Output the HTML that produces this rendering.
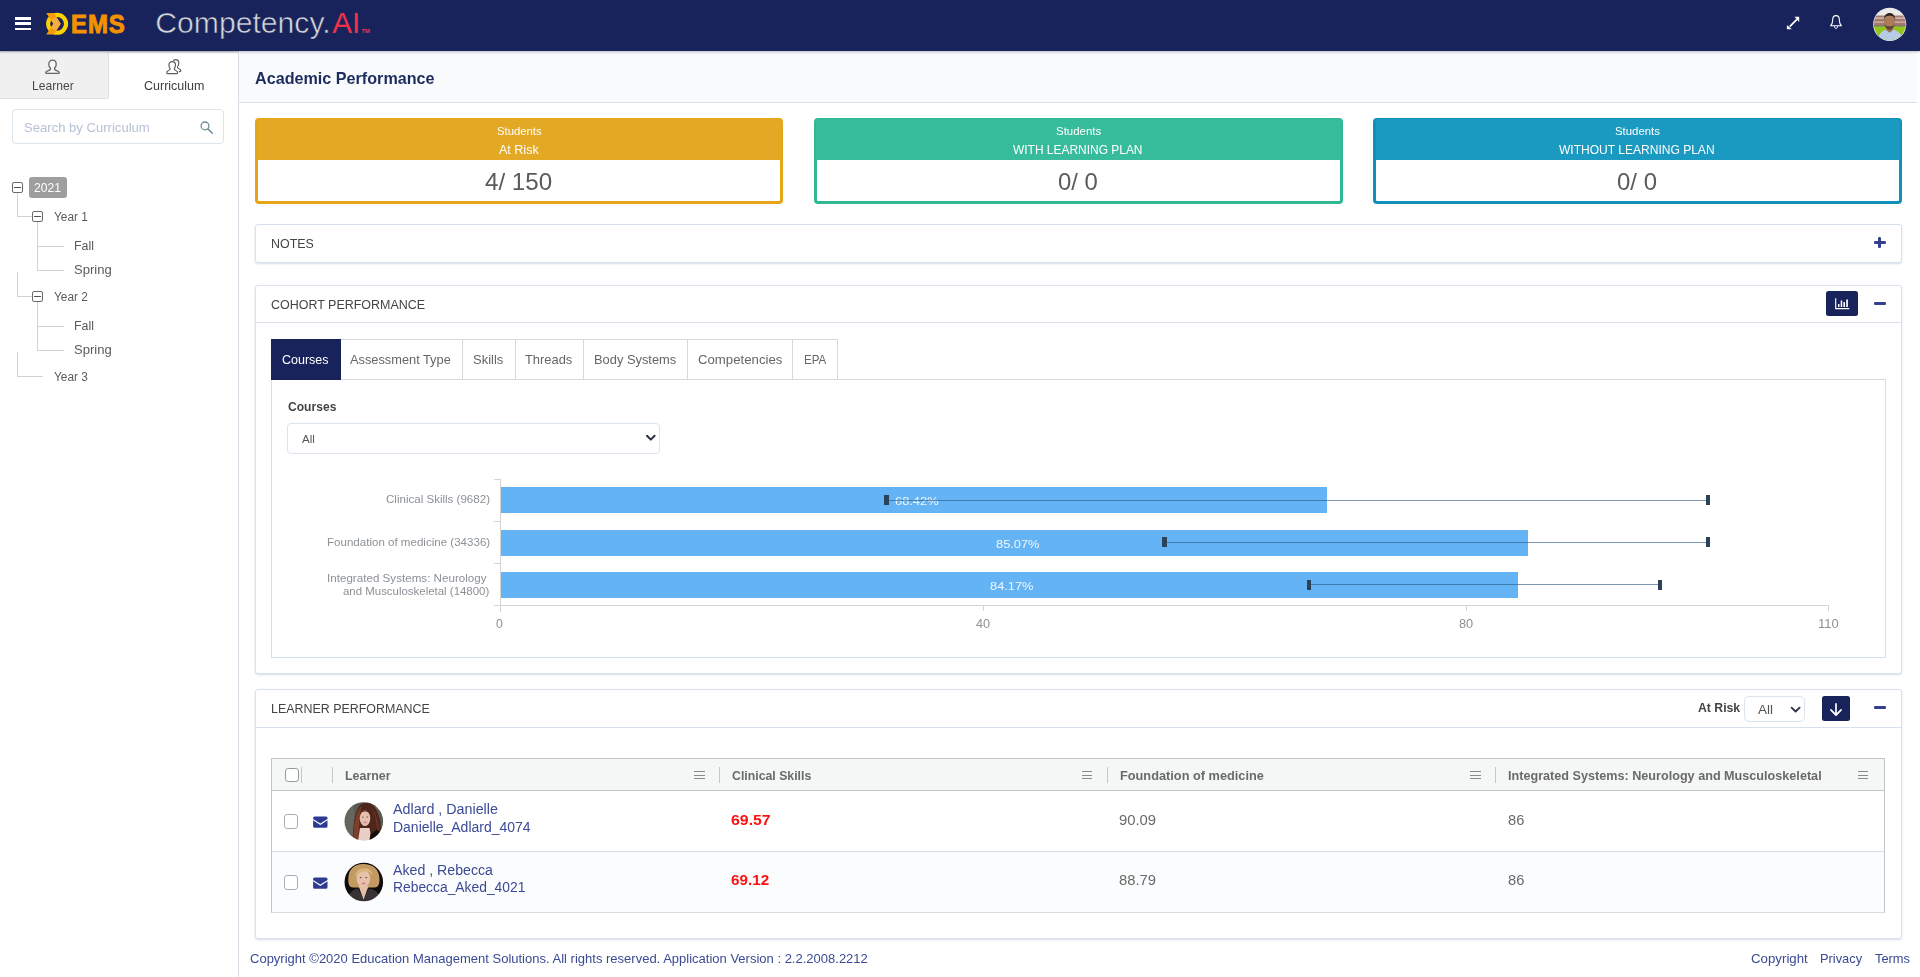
<!DOCTYPE html>
<html><head><meta charset="utf-8"><title>Academic Performance</title>
<style>
*{box-sizing:border-box;margin:0;padding:0}
html,body{width:1920px;height:977px;overflow:hidden;background:#fff;font-family:"Liberation Sans",sans-serif;}
.t{position:absolute;white-space:nowrap;transform-origin:0 50%;display:block}
.b{position:absolute}
.panel{position:absolute;border:1px solid #d9e2ec;border-radius:3px;background:#fff;box-shadow:0 1px 2px rgba(180,195,215,.55)}
</style></head><body>
<div class="b" style="left:0;top:0;width:1920px;height:51px;background:#18235b;box-shadow:0 1px 2px rgba(0,0,0,.25)"></div>
<div class="b" style="left:15px;top:17.0px;width:16px;height:2.6px;background:#fff"></div>
<div class="b" style="left:15px;top:22.3px;width:16px;height:2.6px;background:#fff"></div>
<div class="b" style="left:15px;top:27.6px;width:16px;height:2.6px;background:#fff"></div>
<svg class="b" style="left:40px;top:5px" width="100" height="40" viewBox="40 5 100 40">
<defs><clipPath id="hole"><circle cx="57.1" cy="23.85" r="6.9"/></clipPath></defs>
<circle cx="57.1" cy="23.85" r="8.95" fill="none" stroke="#fdd000" stroke-width="4.1"/>
<polygon points="46.2,13.1 53.9,13.1 60.7,23.8 53.9,34.5 46.2,34.5 53.4,23.8" fill="#f59a0a"/>
<polygon points="46.2,13.1 53.9,13.1 60.7,23.8 53.9,34.5 46.2,34.5 53.4,23.8" fill="#f6ac40" clip-path="url(#hole)"/>
<text transform="translate(71.1,33.05) scale(0.927,1)" x="0" y="0" font-family="Liberation Sans, sans-serif" font-weight="700" font-size="25.9" fill="#f39200" stroke="#f39200" stroke-width="0.95" letter-spacing="0.95">EMS</text>
</svg>
<svg class="b" style="left:150px;top:0px" width="240" height="50" viewBox="150 0 240 50">
<text x="155.2" y="32.8" font-family="Liberation Sans, sans-serif" font-size="28.6" fill="#d6d8da" stroke="#18235b" stroke-width="0.55" textLength="175.5" lengthAdjust="spacingAndGlyphs">Competency.</text>
<text x="332.2" y="32.8" font-family="Liberation Sans, sans-serif" font-size="28.6" fill="#f1314b" stroke="#18235b" stroke-width="0" textLength="28" lengthAdjust="spacingAndGlyphs">AI</text>
<text x="361.5" y="33" font-family="Liberation Sans, sans-serif" font-size="5.5" font-weight="700" fill="#f1314b" textLength="8.5" lengthAdjust="spacingAndGlyphs">TM</text>
</svg>
<svg class="b" style="left:1780px;top:10px" width="26" height="26" viewBox="1780 10 26 26">
<g fill="#fff" stroke="none">
<polygon points="1799.2,16.8 1799.2,21.9 1794.5,16.8"/>
<polygon points="1786.9,29.2 1786.9,25.0 1791.8,29.2"/>
<polygon points="1796.3,18.7 1797.5,19.9 1790.3,27.2 1789.1,26.0"/>
</g></svg>
<svg class="b" style="left:1824px;top:10px" width="24" height="24" viewBox="1824 10 24 24">
<path d="M1830.5 25.8 C1832.6 24.0 1832.6 22.2 1832.6 20.4 C1832.6 17.4 1833.9 15.65 1836.0 15.65 C1838.1 15.65 1839.4 17.4 1839.4 20.4 C1839.4 22.2 1839.4 24.0 1841.5 25.8 Z" fill="none" stroke="#fff" stroke-width="1.1" stroke-linejoin="round"/>
<path d="M1834.4 26.2 C1834.4 29.2 1837.6 29.2 1837.6 26.2" fill="none" stroke="#fff" stroke-width="1.0"/>
</svg>
<svg class="b" style="left:1870px;top:5px" width="40" height="40" viewBox="1870 5 40 40">
<defs><clipPath id="avc"><circle cx="1889.7" cy="24.3" r="15.9"/></clipPath></defs>
<circle cx="1889.7" cy="24.3" r="16.6" fill="#e4e7ef"/>
<g clip-path="url(#avc)">
<rect x="1870" y="5" width="40" height="14" fill="#eceae8"/>
<rect x="1870" y="15.5" width="40" height="11" fill="#a9776b"/>
<rect x="1870" y="17.5" width="40" height="1.2" fill="#d8cfc9"/>
<rect x="1870" y="21.5" width="40" height="1.2" fill="#cdbfb8"/>
<rect x="1870" y="25" width="40" height="2" fill="#7f7a70"/>
<rect x="1870" y="26.5" width="40" height="9" fill="#93c51c"/>
<rect x="1870" y="33.5" width="40" height="10" fill="#86b628"/>
<path d="M1877.5 42 C1878 33.5 1882 31 1886.5 29.5 L1889.5 32 L1892.8 29.5 C1898 31 1902.3 33.5 1903 42Z" fill="#b8cbe6"/>
<path d="M1886.6 27 L1892.6 27 L1893 30 L1889.6 32.8 L1886.3 30Z" fill="#9a6d52"/>
<ellipse cx="1889.5" cy="21.4" rx="5.5" ry="7.6" fill="#ab7b5c"/>
<path d="M1883.9 20.6 C1883.2 10.5 1896 10.5 1895.2 20.6 C1894.6 16.8 1893 15.8 1889.5 15.8 C1886 15.8 1884.5 16.8 1883.9 20.6Z" fill="#2d2621"/>
<path d="M1884.6 23.5 C1885 31.5 1894 31.5 1894.5 23.5 C1893 27 1891.5 26.2 1889.5 26.2 C1887.5 26.2 1886 27 1884.6 23.5Z" fill="#5c4436"/>
</g></svg>
<div class="b" style="left:238px;top:51px;width:1px;height:926px;background:#d9dfe7"></div>
<div class="b" style="left:0;top:52px;width:109px;height:47px;background:#f0f0f0;border-right:1px solid #dcdfe3;border-bottom:1px solid #dcdfe3;border-bottom-right-radius:2px"></div>
<svg class="b" style="left:40px;top:56px" width="26" height="22" viewBox="40 56 26 22">
<path d="M52.5 60.2 C55.0 60.2 56.2 62.2 56.2 64.2 C56.2 66.2 55.4 67.4 54.5 68.3 C54.2 69.4 55.0 70.0 56.6 70.6 C58.8 71.4 59.5 72.0 59.3 72.8 C59.2 73.3 58.8 73.4 58.2 73.4 L46.8 73.4 C46.2 73.4 45.8 73.3 45.7 72.8 C45.5 72.0 46.2 71.4 48.4 70.6 C50.0 70.0 50.8 69.4 50.5 68.3 C49.6 67.4 48.8 66.2 48.8 64.2 C48.8 62.2 50.0 60.2 52.5 60.2 Z" fill="#f6f6f6" stroke="#666" stroke-width="1.3" stroke-linejoin="round"/>
</svg>
<svg class="b" style="left:160px;top:56px" width="28" height="22" viewBox="160 56 28 22">
<path d="M173.5 60.4 C174.3 59.8 175.0 59.6 175.6 59.6 C177.9 59.6 178.8 61.3 178.8 63.2 C178.8 64.8 178.3 65.9 177.5 66.7 C177.2 67.6 177.8 68.2 178.9 68.7 C180.4 69.4 181.0 70.1 180.8 70.9 C180.7 71.5 180.2 71.7 179.4 71.6" fill="none" stroke="#5e5e5e" stroke-width="1.2" stroke-linecap="round" stroke-linejoin="round"/>
<path d="M172.1 61.6 C174.3 61.6 175.5 63.2 175.5 65.0 C175.5 66.6 175.0 67.6 174.3 68.4 C174.0 69.4 174.6 70.0 175.8 70.5 C177.4 71.1 177.8 72.0 177.6 72.8 C177.5 73.4 177.1 73.6 176.5 73.6 L167.9 73.6 C167.3 73.6 166.9 73.4 166.8 72.8 C166.6 72.0 167.0 71.1 168.6 70.5 C169.8 70.0 170.4 69.4 170.1 68.4 C169.4 67.6 168.9 66.6 168.9 65.0 C168.9 63.2 170.1 61.6 172.1 61.6 Z" fill="#fff" stroke="#5e5e5e" stroke-width="1.2" stroke-linejoin="round"/>
</svg>
<span class="t" style="left:31.9px;top:66.00px;font-size:13.10px;line-height:40px;color:#4a4a4a;font-weight:400;transform:scaleX(0.9235);">Learner</span>
<span class="t" style="left:143.5px;top:66.00px;font-size:13.10px;line-height:40px;color:#3e3e3e;font-weight:400;transform:scaleX(0.9554);">Curriculum</span>
<div class="b" style="left:12px;top:109px;width:212px;height:35px;border:1px solid #dce4eb;border-radius:4px;background:#fff"></div>
<span class="t" style="left:23.8px;top:108.40px;font-size:13.60px;line-height:40px;color:#b9c0d6;font-weight:400;transform:scaleX(0.9621);">Search by Curriculum</span>
<svg class="b" style="left:196px;top:117px" width="22" height="20" viewBox="196 117 22 20">
<circle cx="205" cy="125.9" r="3.9" fill="none" stroke="#6f8b97" stroke-width="1.3"/>
<path d="M207.9 128.9 L212.3 133.3" stroke="#6f8b97" stroke-width="1.5" stroke-linecap="round"/>
</svg>
<div class="b" style="left:17px;top:193px;width:1px;height:24px;background:#d2d2d2"></div>
<div class="b" style="left:17px;top:216px;width:15px;height:1px;background:#d2d2d2"></div>
<div class="b" style="left:17px;top:272px;width:1px;height:25px;background:#d2d2d2"></div>
<div class="b" style="left:17px;top:296px;width:15px;height:1px;background:#d2d2d2"></div>
<div class="b" style="left:17px;top:352px;width:1px;height:25px;background:#d2d2d2"></div>
<div class="b" style="left:17px;top:376px;width:26px;height:1px;background:#d2d2d2"></div>
<div class="b" style="left:37px;top:222px;width:1px;height:49px;background:#d2d2d2"></div>
<div class="b" style="left:37px;top:246px;width:27px;height:1px;background:#d2d2d2"></div>
<div class="b" style="left:37px;top:270px;width:27px;height:1px;background:#d2d2d2"></div>
<div class="b" style="left:37px;top:302px;width:1px;height:49px;background:#d2d2d2"></div>
<div class="b" style="left:37px;top:326px;width:27px;height:1px;background:#d2d2d2"></div>
<div class="b" style="left:37px;top:350px;width:27px;height:1px;background:#d2d2d2"></div>
<div class="b" style="left:12px;top:182px;width:11px;height:11px;border:1px solid #6a6a6a;border-radius:2px;background:#fff"></div><div class="b" style="left:14px;top:187px;width:7px;height:1px;background:#555"></div>
<div class="b" style="left:32px;top:211px;width:11px;height:11px;border:1px solid #6a6a6a;border-radius:2px;background:#fff"></div><div class="b" style="left:34px;top:216px;width:7px;height:1px;background:#555"></div>
<div class="b" style="left:32px;top:291px;width:11px;height:11px;border:1px solid #6a6a6a;border-radius:2px;background:#fff"></div><div class="b" style="left:34px;top:296px;width:7px;height:1px;background:#555"></div>
<div class="b" style="left:28.5px;top:177px;width:38.5px;height:21px;background:#9e9e9e;border-radius:3px"></div>
<span class="t" style="left:33.8px;top:167.80px;font-size:12.20px;line-height:40px;color:#fff;font-weight:400;transform:scaleX(0.9948);">2021</span>
<span class="t" style="left:54.0px;top:196.90px;font-size:12.30px;line-height:40px;color:#5a5a5a;font-weight:400;transform:scaleX(0.9627);">Year 1</span>
<span class="t" style="left:74.3px;top:226.40px;font-size:12.30px;line-height:40px;color:#5a5a5a;font-weight:400;transform:scaleX(1.0091);">Fall</span>
<span class="t" style="left:74.3px;top:250.30px;font-size:12.30px;line-height:40px;color:#5a5a5a;font-weight:400;transform:scaleX(1.0603);">Spring</span>
<span class="t" style="left:54.0px;top:276.90px;font-size:12.30px;line-height:40px;color:#5a5a5a;font-weight:400;transform:scaleX(0.9627);">Year 2</span>
<span class="t" style="left:74.3px;top:306.40px;font-size:12.30px;line-height:40px;color:#5a5a5a;font-weight:400;transform:scaleX(1.0091);">Fall</span>
<span class="t" style="left:74.3px;top:330.30px;font-size:12.30px;line-height:40px;color:#5a5a5a;font-weight:400;transform:scaleX(1.0603);">Spring</span>
<span class="t" style="left:54.0px;top:356.60px;font-size:12.30px;line-height:40px;color:#5a5a5a;font-weight:400;transform:scaleX(0.9627);">Year 3</span>
<div class="b" style="left:239px;top:51px;width:1678px;height:52px;background:#f9fafc;border-bottom:1px solid #d6e0ea"></div>
<span class="t" style="left:255.3px;top:58.80px;font-size:16.90px;line-height:40px;color:#1c2b5e;font-weight:700;transform:scaleX(0.9565);">Academic Performance</span>
<div class="b" style="left:255px;top:118px;width:528px;height:86px;background:#e5a516;border-radius:4px"></div>
<div class="b" style="left:257.5px;top:119px;width:523px;height:42px;background:#e3a924;border-radius:2px 2px 0 0"></div>
<div class="b" style="left:258px;top:160.4px;width:522px;height:40.6px;background:#fff;border-radius:0 0 1px 1px"></div>
<span class="t" style="left:496.8px;top:110.60px;font-size:10.90px;line-height:40px;color:#fff;font-weight:400;transform:scaleX(1.0389);">Students</span>
<span class="t" style="left:499.4px;top:130.30px;font-size:12.90px;line-height:40px;color:#fff;font-weight:400;transform:scaleX(0.9717);">At Risk</span>
<span class="t" style="left:485.0px;top:161.80px;font-size:23.40px;line-height:40px;color:#5b5b5b;font-weight:400;transform:scaleX(1.0329);">4/ 150</span>
<div class="b" style="left:813.5px;top:118px;width:529.5px;height:86px;background:#2fb893;border-radius:4px"></div>
<div class="b" style="left:816px;top:119px;width:524.5px;height:42px;background:#37bc9b;border-radius:2px 2px 0 0"></div>
<div class="b" style="left:816.5px;top:160.4px;width:523.5px;height:40.6px;background:#fff;border-radius:0 0 1px 1px"></div>
<span class="t" style="left:1055.8px;top:110.60px;font-size:10.90px;line-height:40px;color:#fff;font-weight:400;transform:scaleX(1.0505);">Students</span>
<span class="t" style="left:1013.1px;top:130.30px;font-size:12.90px;line-height:40px;color:#fff;font-weight:400;transform:scaleX(0.9272);">WITH LEARNING PLAN</span>
<span class="t" style="left:1058.3px;top:161.80px;font-size:23.40px;line-height:40px;color:#5b5b5b;font-weight:400;transform:scaleX(1.0223);">0/ 0</span>
<div class="b" style="left:1373px;top:118px;width:529px;height:86px;background:#1190ba;border-radius:4px"></div>
<div class="b" style="left:1375.5px;top:119px;width:524px;height:42px;background:#1a99c1;border-radius:2px 2px 0 0"></div>
<div class="b" style="left:1376px;top:160.4px;width:523px;height:40.6px;background:#fff;border-radius:0 0 1px 1px"></div>
<span class="t" style="left:1615.0px;top:110.60px;font-size:10.90px;line-height:40px;color:#fff;font-weight:400;transform:scaleX(1.0459);">Students</span>
<span class="t" style="left:1559.3px;top:130.30px;font-size:12.90px;line-height:40px;color:#fff;font-weight:400;transform:scaleX(0.9336);">WITHOUT LEARNING PLAN</span>
<span class="t" style="left:1617.3px;top:161.80px;font-size:23.40px;line-height:40px;color:#5b5b5b;font-weight:400;transform:scaleX(1.0248);">0/ 0</span>
<div class="panel" style="left:255px;top:224px;width:1647px;height:39px"></div>
<span class="t" style="left:271.4px;top:224.40px;font-size:13.70px;line-height:40px;color:#444;font-weight:400;transform:scaleX(0.9090);">NOTES</span>
<div class="b" style="left:1873.8px;top:241px;width:12px;height:3.2px;background:#34408f;border-radius:1.2px"></div>
<div class="b" style="left:1878.2px;top:236.8px;width:3.2px;height:11.6px;background:#34408f;border-radius:1.2px"></div>
<div class="panel" style="left:255px;top:285px;width:1647px;height:389px"></div>
<div class="b" style="left:256px;top:322px;width:1645px;height:1px;background:#d9e2ec"></div>
<span class="t" style="left:271.4px;top:285.20px;font-size:13.70px;line-height:40px;color:#444;font-weight:400;transform:scaleX(0.9117);">COHORT PERFORMANCE</span>
<div class="b" style="left:1826px;top:291px;width:32px;height:25px;background:#18235b;border-radius:2.5px"></div>
<svg class="b" style="left:1832px;top:296px" width="20" height="16" viewBox="1832 296 20 16">
<path d="M1835.7 298.2 V308.6 H1849.3" fill="none" stroke="#fff" stroke-width="1.15"/>
<rect x="1838.0" y="304.1" width="1.5" height="2.9" fill="#fff"/>
<rect x="1840.7" y="300.5" width="1.5" height="6.5" fill="#fff"/>
<rect x="1843.4" y="302.1" width="1.6" height="4.9" fill="#fff"/>
<rect x="1846.2" y="299.5" width="1.7" height="7.5" fill="#fff"/>
</svg>
<div class="b" style="left:1873.8px;top:301.5px;width:12px;height:3.3px;background:#34408f;border-radius:1.3px"></div>
<div class="b" style="left:340px;top:338.6px;width:498px;height:41px;border:1px solid #d6d9dc;border-left:none;background:#fff"></div>
<div class="b" style="left:462px;top:339px;width:1px;height:40px;background:#d6d9dc"></div>
<div class="b" style="left:514.5px;top:339px;width:1px;height:40px;background:#d6d9dc"></div>
<div class="b" style="left:583px;top:339px;width:1px;height:40px;background:#d6d9dc"></div>
<div class="b" style="left:687.2px;top:339px;width:1px;height:40px;background:#d6d9dc"></div>
<div class="b" style="left:792.2px;top:339px;width:1px;height:40px;background:#d6d9dc"></div>
<div class="b" style="left:271px;top:379.4px;width:1615px;height:279px;border:1px solid #d6e0ea;border-top-color:#d6d9dc"></div>
<div class="b" style="left:270.8px;top:338.6px;width:70px;height:41.2px;background:#18235b"></div>
<span class="t" style="left:282.2px;top:339.70px;font-size:13.10px;line-height:40px;color:#fff;font-weight:400;transform:scaleX(0.9553);">Courses</span>
<span class="t" style="left:350.3px;top:339.70px;font-size:13.10px;line-height:40px;color:#666;font-weight:400;transform:scaleX(0.9772);">Assessment Type</span>
<span class="t" style="left:473.3px;top:339.70px;font-size:13.10px;line-height:40px;color:#666;font-weight:400;transform:scaleX(0.9912);">Skills</span>
<span class="t" style="left:525.2px;top:339.70px;font-size:13.10px;line-height:40px;color:#666;font-weight:400;transform:scaleX(0.9842);">Threads</span>
<span class="t" style="left:594.3px;top:339.70px;font-size:13.10px;line-height:40px;color:#666;font-weight:400;transform:scaleX(0.9830);">Body Systems</span>
<span class="t" style="left:698.0px;top:339.70px;font-size:13.10px;line-height:40px;color:#666;font-weight:400;transform:scaleX(1.0079);">Competencies</span>
<span class="t" style="left:803.9px;top:339.70px;font-size:13.10px;line-height:40px;color:#666;font-weight:400;transform:scaleX(0.8835);">EPA</span>
<span class="t" style="left:287.8px;top:387.30px;font-size:12.70px;line-height:40px;color:#444;font-weight:700;transform:scaleX(0.9524);">Courses</span>
<div class="b" style="left:287px;top:423px;width:372.5px;height:30.5px;border:1px solid #dbe4ec;border-radius:4px;background:#fff"></div>
<span class="t" style="left:301.9px;top:418.50px;font-size:11.30px;line-height:40px;color:#555;font-weight:400;transform:scaleX(1.0193);">All</span>
<svg class="b" style="left:642px;top:430px" width="16" height="16" viewBox="642 430 16 16">
<path d="M647 435.7 L650.8 439.6 L654.6 435.7" fill="none" stroke="#2b3044" stroke-width="2" stroke-linecap="round" stroke-linejoin="round"/></svg>
<div class="b" style="left:500px;top:479px;width:1px;height:133px;background:#d4d4d4"></div>
<div class="b" style="left:494px;top:605px;width:1334.5px;height:1px;background:#d4d4d4"></div>
<div class="b" style="left:494px;top:479px;width:6px;height:1px;background:#d4d4d4"></div>
<div class="b" style="left:494px;top:520.5px;width:6px;height:1px;background:#d4d4d4"></div>
<div class="b" style="left:494px;top:563px;width:6px;height:1px;background:#d4d4d4"></div>
<div class="b" style="left:983px;top:605px;width:1px;height:6px;background:#d4d4d4"></div>
<div class="b" style="left:1466px;top:605px;width:1px;height:6px;background:#d4d4d4"></div>
<div class="b" style="left:1828px;top:605px;width:1px;height:6px;background:#d4d4d4"></div>
<div class="b" style="left:501px;top:487px;width:826.3px;height:26.1px;background:#64b4f5"></div>
<div class="b" style="left:501px;top:529.5px;width:1027.3px;height:26.1px;background:#64b4f5"></div>
<div class="b" style="left:501px;top:572px;width:1016.5px;height:26.1px;background:#64b4f5"></div>
<span class="t" style="left:385.7px;top:479.00px;font-size:11.30px;line-height:40px;color:#8c9196;font-weight:400;transform:scaleX(1.0223);">Clinical Skills (9682)</span>
<span class="t" style="left:326.5px;top:521.70px;font-size:11.30px;line-height:40px;color:#8c9196;font-weight:400;transform:scaleX(1.0228);">Foundation of medicine (34336)</span>
<span class="t" style="left:326.5px;top:557.90px;font-size:11.30px;line-height:40px;color:#8c9196;font-weight:400;transform:scaleX(1.0288);">Integrated Systems: Neurology</span>
<span class="t" style="left:343.4px;top:570.90px;font-size:11.30px;line-height:40px;color:#8c9196;font-weight:400;transform:scaleX(1.0126);">and Musculoskeletal (14800)</span>
<span class="t" style="left:895.0px;top:481.00px;font-size:11.30px;line-height:40px;color:#eef6fe;font-weight:400;transform:scaleX(1.1376);">68.42%</span>
<span class="t" style="left:995.7px;top:523.80px;font-size:11.30px;line-height:40px;color:#eef6fe;font-weight:400;transform:scaleX(1.1350);">85.07%</span>
<span class="t" style="left:990.4px;top:566.20px;font-size:11.30px;line-height:40px;color:#eef6fe;font-weight:400;transform:scaleX(1.1350);">84.17%</span>
<span class="t" style="left:496.3px;top:604.00px;font-size:11.90px;line-height:40px;color:#8c9196;font-weight:400;transform:scaleX(1.0275);">0</span>
<span class="t" style="left:976.0px;top:604.00px;font-size:11.90px;line-height:40px;color:#8c9196;font-weight:400;transform:scaleX(1.0728);">40</span>
<span class="t" style="left:1458.6px;top:604.00px;font-size:11.90px;line-height:40px;color:#8c9196;font-weight:400;transform:scaleX(1.0728);">80</span>
<span class="t" style="left:1818.2px;top:604.00px;font-size:11.90px;line-height:40px;color:#8c9196;font-weight:400;transform:scaleX(1.0964);">110</span>
<div class="b" style="left:886.6px;top:500px;width:821.7px;height:1px;background:rgba(45,88,130,.62)"></div>
<div class="b" style="left:884.4px;top:495px;width:4.4px;height:10px;background:#2c4258"></div>
<div class="b" style="left:1706.1px;top:495px;width:4.4px;height:10px;background:#2c4258"></div>
<div class="b" style="left:1164.4px;top:542px;width:543.9px;height:1px;background:rgba(45,88,130,.62)"></div>
<div class="b" style="left:1162.2px;top:537.4px;width:4.4px;height:10px;background:#2c4258"></div>
<div class="b" style="left:1706.1px;top:537.4px;width:4.4px;height:10px;background:#2c4258"></div>
<div class="b" style="left:1308.9px;top:584px;width:350.8px;height:1px;background:rgba(45,88,130,.62)"></div>
<div class="b" style="left:1306.7px;top:579.9px;width:4.4px;height:10px;background:#2c4258"></div>
<div class="b" style="left:1657.5px;top:579.9px;width:4.4px;height:10px;background:#2c4258"></div>
<div class="panel" style="left:255px;top:689px;width:1647px;height:250px"></div>
<div class="b" style="left:256px;top:727px;width:1645px;height:1px;background:#d9e2ec"></div>
<span class="t" style="left:271.4px;top:689.20px;font-size:13.70px;line-height:40px;color:#444;font-weight:400;transform:scaleX(0.9076);">LEARNER PERFORMANCE</span>
<span class="t" style="left:1697.5px;top:688.30px;font-size:12.40px;line-height:40px;color:#444;font-weight:700;transform:scaleX(0.9878);">At Risk</span>
<div class="b" style="left:1743.5px;top:696.2px;width:61px;height:26.2px;border:1px solid #dbe4ec;border-radius:5px;background:#fff"></div>
<span class="t" style="left:1758.1px;top:690.40px;font-size:13.10px;line-height:40px;color:#555;font-weight:400;transform:scaleX(1.0303);">All</span>
<svg class="b" style="left:1786px;top:702px" width="18" height="16" viewBox="1786 702 18 16">
<path d="M1791.6 707.6 L1795.6 711.5 L1799.6 707.6" fill="none" stroke="#2b3044" stroke-width="1.8" stroke-linecap="round" stroke-linejoin="round"/></svg>
<div class="b" style="left:1822px;top:696.3px;width:28px;height:25px;background:#18235b;border-radius:2.5px"></div>
<svg class="b" style="left:1826px;top:700px" width="20" height="20" viewBox="1826 700 20 20">
<path d="M1836 703.9 V715 M1830.9 709.9 L1836 715.2 L1841.1 709.9" fill="none" stroke="#fff" stroke-width="1.7" stroke-linecap="round" stroke-linejoin="round"/></svg>
<div class="b" style="left:1873.6px;top:705.8px;width:12px;height:3.4px;background:#34408f;border-radius:1.3px"></div>
<div class="b" style="left:271px;top:758.3px;width:1614px;height:154.3px;border:1px solid #c0c6ca;border-bottom-color:#d9dcde;background:#fff"></div>
<div class="b" style="left:272px;top:759.3px;width:1612px;height:32px;background:#f5f7f7;border-bottom:1px solid #c0c6ca"></div>
<div class="b" style="left:272px;top:851px;width:1612px;height:1px;background:#d9dcde"></div>
<div class="b" style="left:272px;top:852px;width:1612px;height:59.6px;background:#fbfcfd"></div>
<div class="b" style="left:301.3px;top:767.4px;width:1px;height:15.2px;background:#c3caca"></div>
<div class="b" style="left:331.8px;top:767.4px;width:1px;height:15.2px;background:#c3caca"></div>
<div class="b" style="left:719.3px;top:767.4px;width:1px;height:15.2px;background:#c3caca"></div>
<div class="b" style="left:1107px;top:767.4px;width:1px;height:15.2px;background:#c3caca"></div>
<div class="b" style="left:1495px;top:767.4px;width:1px;height:15.2px;background:#c3caca"></div>
<div class="b" style="left:694.2px;top:771.2px;width:10.4px;height:1px;background:#8a8a8a"></div>
<div class="b" style="left:694.2px;top:774.5px;width:10.4px;height:1px;background:#8a8a8a"></div>
<div class="b" style="left:694.2px;top:777.8px;width:10.4px;height:1px;background:#8a8a8a"></div>
<div class="b" style="left:1082px;top:771.2px;width:10.4px;height:1px;background:#8a8a8a"></div>
<div class="b" style="left:1082px;top:774.5px;width:10.4px;height:1px;background:#8a8a8a"></div>
<div class="b" style="left:1082px;top:777.8px;width:10.4px;height:1px;background:#8a8a8a"></div>
<div class="b" style="left:1470.2px;top:771.2px;width:10.4px;height:1px;background:#8a8a8a"></div>
<div class="b" style="left:1470.2px;top:774.5px;width:10.4px;height:1px;background:#8a8a8a"></div>
<div class="b" style="left:1470.2px;top:777.8px;width:10.4px;height:1px;background:#8a8a8a"></div>
<div class="b" style="left:1858.1px;top:771.2px;width:10.4px;height:1px;background:#8a8a8a"></div>
<div class="b" style="left:1858.1px;top:774.5px;width:10.4px;height:1px;background:#8a8a8a"></div>
<div class="b" style="left:1858.1px;top:777.8px;width:10.4px;height:1px;background:#8a8a8a"></div>
<div class="b" style="left:284.9px;top:768px;width:13.9px;height:13.9px;border:1.5px solid #8f9a9b;border-radius:3.2px;background:#fff"></div>
<div class="b" style="left:283.9px;top:814.3px;width:14.4px;height:14.4px;border:1.5px solid #a4adae;border-radius:3.2px;background:#fff"></div>
<div class="b" style="left:283.9px;top:875.2px;width:14.4px;height:14.4px;border:1.5px solid #a4adae;border-radius:3.2px;background:#fff"></div>
<span class="t" style="left:345.3px;top:756.10px;font-size:12.60px;line-height:40px;color:#6a6a6a;font-weight:700;transform:scaleX(0.9865);">Learner</span>
<span class="t" style="left:732.2px;top:756.10px;font-size:12.60px;line-height:40px;color:#6a6a6a;font-weight:700;transform:scaleX(0.9762);">Clinical Skills</span>
<span class="t" style="left:1119.8px;top:756.10px;font-size:12.60px;line-height:40px;color:#6a6a6a;font-weight:700;transform:scaleX(1.0127);">Foundation of medicine</span>
<span class="t" style="left:1507.8px;top:756.10px;font-size:12.60px;line-height:40px;color:#6a6a6a;font-weight:700;transform:scaleX(1.0026);">Integrated Systems: Neurology and Musculoskeletal</span>
<svg class="b" style="left:313px;top:816px" width="15" height="13" viewBox="0 0 15 13">
<path d="M1.7 0.5 H12.9 Q14.5 0.5 14.5 2.1 V2.9 L7.3 7.5 L0.1 2.9 V2.1 Q0.1 0.5 1.7 0.5 Z M0.1 4.3 L7.3 8.9 L14.5 4.3 V10.2 Q14.5 11.8 12.9 11.8 H1.7 Q0.1 11.8 0.1 10.2 Z" fill="#2c3b90"/></svg>
<svg class="b" style="left:313px;top:876.9px" width="15" height="13" viewBox="0 0 15 13">
<path d="M1.7 0.5 H12.9 Q14.5 0.5 14.5 2.1 V2.9 L7.3 7.5 L0.1 2.9 V2.1 Q0.1 0.5 1.7 0.5 Z M0.1 4.3 L7.3 8.9 L14.5 4.3 V10.2 Q14.5 11.8 12.9 11.8 H1.7 Q0.1 11.8 0.1 10.2 Z" fill="#2c3b90"/></svg>
<svg class="b" style="left:340px;top:798px" width="48" height="48" viewBox="340 798 48 48">
<defs><clipPath id="a1"><circle cx="363.8" cy="821.45" r="19.3"/></clipPath>
<filter id="bl" x="-10%" y="-10%" width="120%" height="120%"><feGaussianBlur stdDeviation="0.55"/></filter></defs>
<g clip-path="url(#a1)"><g filter="url(#bl)">
<rect x="338" y="796" width="52" height="52" fill="#5a5a55"/>
<rect x="338" y="796" width="16" height="52" fill="#66665f"/>
<path d="M354.5 846 C351 836 354 812 360 805 C364 801.5 371 802 374 806 C379 813 382 824 380.5 832 C379 838 376 842 374 846 Z" fill="#4f281b"/>
<path d="M354.5 842 C352 830 355.5 812 361.5 806 C359 816 359.5 830 358 843 Z" fill="#7b4029"/>
<path d="M372 808 C377 815 379.5 826 378.5 833 C376.5 828 376.5 818 372 808Z" fill="#6b3523"/>
<path d="M360 828 L369.5 828 L373 848 L357 848 Z" fill="#e9cfc5"/>
<ellipse cx="365" cy="818.3" rx="5.3" ry="7.7" fill="#e5c0b1"/>
<path d="M359.6 816 C360 808.5 370 808.5 370.5 816 C369 812 366.5 811.5 365 811.5 C363 811.5 361 812 359.6 816Z" fill="#5a2c1d"/>
<ellipse cx="362.8" cy="817" rx="0.9" ry="0.5" fill="#6b4a42"/>
<ellipse cx="367.3" cy="817" rx="0.9" ry="0.5" fill="#6b4a42"/>
<ellipse cx="365.2" cy="822.4" rx="1.7" ry="0.8" fill="#d27f8d"/>
<path d="M370.5 834 L377 829.5 L386 838 L380 848 L368 848 Z" fill="#121010"/>
</g></g></svg>
<svg class="b" style="left:340px;top:858px" width="48" height="48" viewBox="340 858 48 48">
<defs><clipPath id="a2"><circle cx="363.8" cy="882.05" r="19.3"/></clipPath></defs>
<g clip-path="url(#a2)"><g filter="url(#bl)">
<rect x="338" y="856" width="52" height="52" fill="#0d0a0a"/>
<path d="M348.3 880 C348 869 354.5 864 363 864 C372.5 864 379.5 869 379.5 879 C379.8 884 378 887.5 374.5 887.5 L353 887.5 C349.5 887.5 348.3 884.5 348.3 880 Z" fill="#c49a63"/>
<path d="M346 908 C346 894 352 889.5 358 888.5 L363.5 898 L369 888.5 C376 889.5 382 894 382 908 Z" fill="#383334"/>
<path d="M358.5 886 L363.6 899.5 L368.6 886 Z" fill="#e3bfa9"/>
<ellipse cx="363.4" cy="878.6" rx="6.8" ry="8.7" fill="#e6c2ab"/>
<path d="M355.5 877 C354.5 866.5 372 865 372.5 875 C369 869.5 360 870.5 355.5 877 Z" fill="#d8b57c"/>
<ellipse cx="360.6" cy="877.6" rx="1.1" ry="0.55" fill="#5e4a40"/>
<ellipse cx="366.3" cy="877.6" rx="1.1" ry="0.55" fill="#5e4a40"/>
<ellipse cx="363.5" cy="883.4" rx="2.0" ry="0.9" fill="#d4808a"/>
</g></g></svg>
<span class="t" style="left:392.6px;top:789.40px;font-size:14.00px;line-height:40px;color:#3b4a95;font-weight:400;transform:scaleX(1.0212);">Adlard , Danielle</span>
<span class="t" style="left:392.6px;top:806.50px;font-size:14.00px;line-height:40px;color:#3b4a95;font-weight:400;transform:scaleX(0.9987);">Danielle_Adlard_4074</span>
<span class="t" style="left:392.6px;top:850.00px;font-size:14.00px;line-height:40px;color:#3b4a95;font-weight:400;transform:scaleX(1.0118);">Aked , Rebecca</span>
<span class="t" style="left:392.6px;top:867.20px;font-size:14.00px;line-height:40px;color:#3b4a95;font-weight:400;transform:scaleX(0.9889);">Rebecca_Aked_4021</span>
<span class="t" style="left:731.0px;top:799.90px;font-size:14.70px;line-height:40px;color:#fb1212;font-weight:700;transform:scaleX(1.0792);">69.57</span>
<span class="t" style="left:731.0px;top:860.10px;font-size:14.70px;line-height:40px;color:#fb1212;font-weight:700;transform:scaleX(1.0384);">69.12</span>
<span class="t" style="left:1119.3px;top:799.90px;font-size:14.50px;line-height:40px;color:#6a6a6a;font-weight:400;transform:scaleX(1.0224);">90.09</span>
<span class="t" style="left:1119.3px;top:860.10px;font-size:14.50px;line-height:40px;color:#6a6a6a;font-weight:400;transform:scaleX(1.0224);">88.79</span>
<span class="t" style="left:1507.6px;top:799.90px;font-size:14.50px;line-height:40px;color:#6a6a6a;font-weight:400;transform:scaleX(1.0106);">86</span>
<span class="t" style="left:1507.6px;top:860.10px;font-size:14.50px;line-height:40px;color:#6a6a6a;font-weight:400;transform:scaleX(1.0106);">86</span>
<span class="t" style="left:250.2px;top:938.80px;font-size:13.10px;line-height:40px;color:#3b4a95;font-weight:400;transform:scaleX(0.9936);">Copyright ©2020 Education Management Solutions. All rights reserved. Application Version : 2.2.2008.2212</span>
<span class="t" style="left:1751.4px;top:938.80px;font-size:13.10px;line-height:40px;color:#3b4a95;font-weight:400;transform:scaleX(1.0131);">Copyright</span>
<span class="t" style="left:1820.4px;top:938.80px;font-size:13.10px;line-height:40px;color:#3b4a95;font-weight:400;transform:scaleX(0.9803);">Privacy</span>
<span class="t" style="left:1875.0px;top:938.80px;font-size:13.10px;line-height:40px;color:#3b4a95;font-weight:400;transform:scaleX(0.9815);">Terms</span>
<div class="b" style="left:0;top:51px;width:1917px;height:3px;background:linear-gradient(rgba(20,28,70,.22),rgba(20,28,70,0))"></div>
</body></html>
